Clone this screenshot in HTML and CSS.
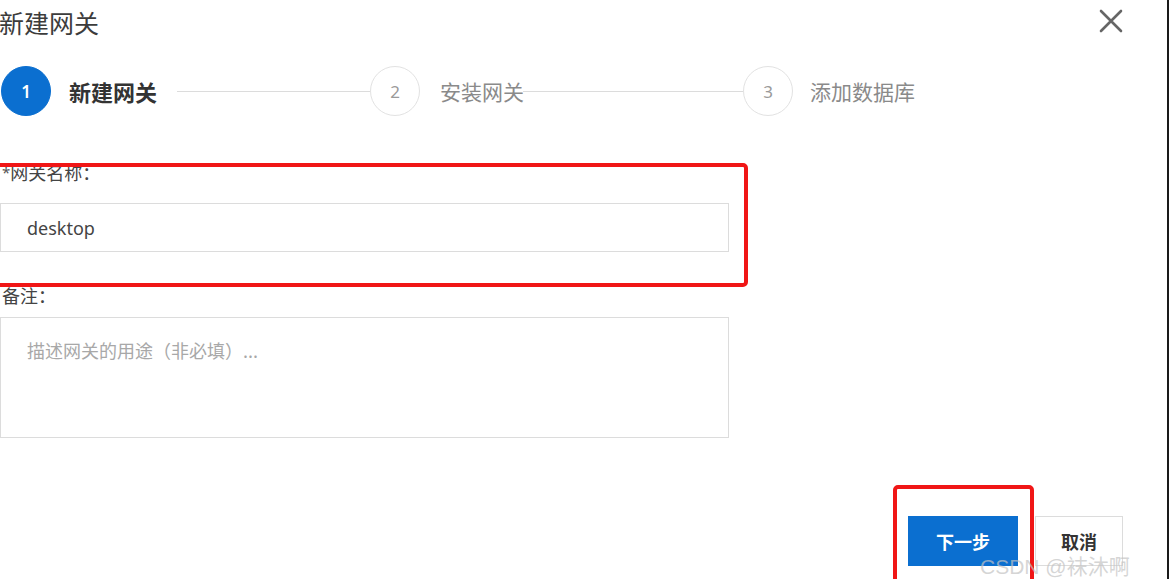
FILE: index.html
```html
<!DOCTYPE html>
<html lang="zh-CN">
<head>
<meta charset="utf-8">
<title>新建网关</title>
<link rel="stylesheet" href="styles.css">
</head>
<body>
<div class="dialog">
  <header class="head">
    <h1 class="title">新建网关</h1>
    <button class="close" type="button" aria-label="关闭">
      <svg width="24" height="24" viewBox="0 0 24 24"><path d="M2 2 L22 22 M22 2 L2 22" stroke="#666" stroke-width="2.6" stroke-linecap="round" fill="none"/></svg>
    </button>
  </header>
  <ol class="steps">
    <li class="step active"><span class="num">1</span><span class="label l1">新建网关</span></li>
    <li class="line line1"></li>
    <li class="step"><span class="num">2</span><span class="label l2">安装网关</span></li>
    <li class="line line2"></li>
    <li class="step"><span class="num">3</span><span class="label l3">添加数据库</span></li>
  </ol>
  <form class="form">
    <label class="field-label"><span class="req">*</span>网关名称：</label>
    <input class="text-input" type="text" value="desktop">
    <label class="field-label remark">备注：</label>
    <textarea class="text-area" placeholder="描述网关的用途（非必填）..."></textarea>
  </form>
  <footer class="foot">
    <button class="btn primary" type="button">下一步</button>
    <button class="btn" type="button">取消</button>
  </footer>
  <div class="mark mark-field"></div>
  <div class="mark mark-btn"></div>
  <div class="watermark">CSDN @袜沐啊</div>
</div>
</body>
</html>
```
FILE: styles.css
```css
* { box-sizing: border-box; }
html, body { margin: 0; background: #fff; }
body { font-family: "Noto Sans", "Noto Sans CJK SC", sans-serif; }

.dialog {
  position: relative;
  width: 1169px;
  height: 579px;
  overflow: hidden;
  background: #fff;
  border-right: 2px solid #1a1a1a;
  display: flex;
  flex-direction: column;
}

.head {
  display: flex;
  justify-content: space-between;
  align-items: flex-start;
  padding-top: 6px;
  height: 38px;
}
.title {
  margin: 0 0 0 -1px;
  font-family: "Noto Sans CJK SC", sans-serif;
  font-size: 25px;
  line-height: 32px;
  font-weight: 400;
  color: #3c3c3c;
}
.close {
  margin: 3px 44px 0 0;
  padding: 0;
  width: 24px;
  height: 24px;
  border: 0;
  background: transparent;
  display: flex;
}

.steps {
  list-style: none;
  margin: 28px 0 0 0;
  padding: 0 0 0 1px;
  height: 50px;
  display: flex;
  align-items: center;
}
.step { display: flex; align-items: center; }
.num {
  width: 50px;
  height: 50px;
  border-radius: 50%;
  border: 1.5px solid #e2e2e2;
  display: flex;
  align-items: center;
  justify-content: center;
  font-family: "Noto Sans", sans-serif;
  font-size: 17px;
  color: #9a9a9a;
}
.step.active .num {
  background: #0b6fd0;
  border-color: #0b6fd0;
  color: #fff;
  font-weight: 600;
}
.label {
  font-family: "Noto Sans CJK SC", sans-serif;
  font-size: 21px;
  line-height: 28px;
  color: #8a8a8a;
  white-space: nowrap;
}
.step.active .label { color: #333; font-weight: 700; font-size: 22px; }
.l1 { margin-left: 18px; width: 108px; }
.l2 { margin-left: 20px; width: 83px; }
.l3 { margin-left: 17px; }
.line { height: 1px; background: #dcdcdc; }
.line1 { width: 193px; }
.line2 { width: 220px; }

.form { margin: 44px 0 0 0; }
.field-label {
  display: block;
  margin-left: 2px;
  font-family: "Noto Sans CJK SC", sans-serif;
  font-size: 18px;
  line-height: 24px;
  color: #444;
}
.req { color: #555; font-family: "Noto Sans", sans-serif; font-size: 15px; vertical-align: top; }
.text-input {
  display: block;
  width: 729px;
  height: 49px;
  margin: 19px 0 0 0;
  padding: 0 0 0 26px;
  border: 1px solid #dcdcdc;
  border-radius: 0;
  outline: none;
  font-family: "Noto Sans", "Noto Sans CJK SC", sans-serif;
  font-size: 18px;
  color: #444;
  background: #fff;
}
.remark { margin-top: 31px; }
.text-area {
  display: block;
  width: 729px;
  height: 121px;
  margin: 10px 0 0 0;
  padding: 20px 26px;
  border: 1px solid #dcdcdc;
  border-radius: 0;
  outline: none;
  resize: none;
  font-family: "Noto Sans CJK SC", sans-serif;
  font-size: 18px;
  line-height: 24px;
  color: #444;
  background: #fff;
}
.text-area::placeholder { color: #a8a8a8; }

.foot {
  margin-top: 78px;
  display: flex;
  justify-content: flex-end;
  gap: 17px;
  padding-right: 44px;
}
.btn {
  width: 88px;
  height: 50px;
  border: 1px solid #dcdcdc;
  background: #fff;
  font-family: "Noto Sans CJK SC", sans-serif;
  font-size: 18px;
  font-weight: 700;
  color: #333;
  padding: 0;
}
.btn.primary {
  width: 110px;
  background: #0b6fd0;
  border-color: #0b6fd0;
  color: #fff;
}

.mark {
  position: absolute;
  border: 4px solid #f01616;
  border-radius: 5px;
  pointer-events: none;
}
.mark-field { left: -10px; top: 163px; width: 758px; height: 124px; }
.mark-btn { left: 893px; top: 485px; width: 141px; height: 110px; }

.watermark {
  position: absolute;
  left: 980px;
  top: 556px;
  font-family: "Liberation Sans", "Noto Sans CJK SC", sans-serif;
  font-size: 21px;
  line-height: 22px;
  color: rgba(195, 195, 195, 0.7);
  white-space: nowrap;
  pointer-events: none;
}
```
